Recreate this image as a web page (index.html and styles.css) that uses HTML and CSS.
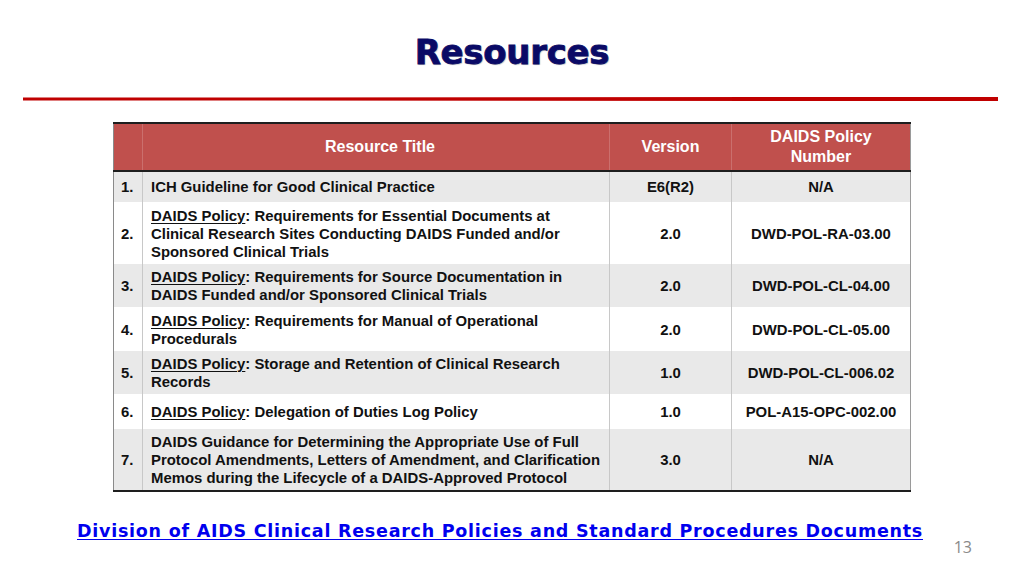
FILE: index.html
```html
<!DOCTYPE html>
<html>
<head>
<meta charset="utf-8">
<link rel="stylesheet" href="styles.css">
</head>
<body>
<div class="slide">
  <h1 class="title">Resources</h1>
  <div class="rule"></div>
  <table class="res">
    <thead>
      <tr>
        <th class="num"></th>
        <th class="ttl">Resource Title</th>
        <th class="ver">Version</th>
        <th class="pol">DAIDS Policy<br>Number</th>
      </tr>
    </thead>
    <tbody>
      <tr class="alt r1">
        <td class="num">1.</td>
        <td class="ttl">ICH Guideline for Good Clinical Practice</td>
        <td class="ver">E6(R2)</td>
        <td class="pol">N/A</td>
      </tr>
      <tr class="r2">
        <td class="num">2.</td>
        <td class="ttl"><u>DAIDS Policy</u>: Requirements for Essential Documents at<br>Clinical Research Sites Conducting DAIDS Funded and/or<br>Sponsored Clinical Trials</td>
        <td class="ver">2.0</td>
        <td class="pol">DWD-POL-RA-03.00</td>
      </tr>
      <tr class="alt">
        <td class="num">3.</td>
        <td class="ttl"><u>DAIDS Policy</u>: Requirements for Source Documentation in<br>DAIDS Funded and/or Sponsored Clinical Trials</td>
        <td class="ver">2.0</td>
        <td class="pol">DWD-POL-CL-04.00</td>
      </tr>
      <tr class="r4">
        <td class="num">4.</td>
        <td class="ttl"><u>DAIDS Policy</u>: Requirements for Manual of Operational<br>Procedurals</td>
        <td class="ver">2.0</td>
        <td class="pol">DWD-POL-CL-05.00</td>
      </tr>
      <tr class="alt">
        <td class="num">5.</td>
        <td class="ttl"><u>DAIDS Policy</u>: Storage and Retention of Clinical Research<br>Records</td>
        <td class="ver">1.0</td>
        <td class="pol">DWD-POL-CL-006.02</td>
      </tr>
      <tr class="r6">
        <td class="num">6.</td>
        <td class="ttl"><u>DAIDS Policy</u>: Delegation of Duties Log Policy</td>
        <td class="ver">1.0</td>
        <td class="pol">POL-A15-OPC-002.00</td>
      </tr>
      <tr class="alt last">
        <td class="num">7.</td>
        <td class="ttl">DAIDS Guidance for Determining the Appropriate Use of Full<br>Protocol Amendments, Letters of Amendment, and Clarification<br>Memos during the Lifecycle of a DAIDS-Approved Protocol</td>
        <td class="ver">3.0</td>
        <td class="pol">N/A</td>
      </tr>
    </tbody>
  </table>
  <div class="footer">
    <a class="link" href="#">Division of AIDS Clinical Research Policies and Standard Procedures Documents</a>
    <span class="pagenum">13</span>
  </div>
</div>
</body>
</html>
```

FILE: styles.css
```css
* { box-sizing: border-box; }
html, body { margin: 0; padding: 0; background: #fff; }
.slide {
  width: 1024px;
  height: 576px;
  display: flex;
  flex-direction: column;
  overflow: hidden;
  font-family: "Liberation Sans", Arial, sans-serif;
}
.slide > * { flex-shrink: 0; }
.title {
  margin: 0;
  padding-top: 30px;
  height: 96px;
  text-align: center;
  font-family: "DejaVu Sans", sans-serif;
  font-weight: 900;
  font-size: 34px;
  line-height: 44px;
  color: #0a0a66;
  -webkit-text-stroke: 0.8px #0a0a66;
  text-shadow: 1px 1px 1px rgba(0,0,0,0.25);
  letter-spacing: -0.3px;
}
.rule {
  margin: 1px 26px 0 23px;
  height: 4px;
  background: #c00000;
  clip-path: polygon(0 0.5px, 100% 0, 100% 100%, 0 3.5px);
}
.res {
  margin: 21px 0 0 113px;
  width: 797px;
  table-layout: fixed;
  border-collapse: collapse;
  font-size: 14.9px;
  font-weight: bold;
  line-height: 18px;
  color: #111;
  border-left: 1px solid #8a8a8a;
  border-right: 1px solid #9a9a9a;
}
.res th {
  background: #c0504d;
  color: #fff;
  font-size: 16px;
  line-height: 20px;
  height: 48px;
  padding: 3px 8px;
  border-top: 2px solid #1e1e1e;
  border-bottom: 2px solid #1e1e1e;
  border-left: 1px solid rgba(255,255,255,0.18);
}
.res th:first-child { border-left: 1px solid #8a8a8a; }
.res td {
  padding: 4px 8px 3px;
  border-left: 1px solid #c8c8c8;
  vertical-align: middle;
  background: #fff;
}
.res td:first-child { border-left: 1px solid #8a8a8a; }
.res tr.alt td { background: #e9e9e9; }
.res tr.r1 td { height: 31px; padding-top: 2px; padding-bottom: 2px; }
.res tr.r2 td { height: 62px; }
.res tr.r4 td { height: 44px; }
.res tr.r6 td { height: 35px; }
.res tr.last td { border-bottom: 2px solid #1e1e1e; height: 61px; }
.res .num { width: 29px; padding-left: 7px; padding-right: 0; text-align: left; }
.res .ttl { width: 467px; text-align: left; padding-left: 8px; padding-right: 0; white-space: nowrap; }
.res th.ttl { text-align: center; }
.res .ver { width: 122px; text-align: center; }
.res .pol { width: 179px; text-align: center; padding-left: 2px; padding-right: 2px; }
.res u { text-decoration-thickness: 1px; text-underline-offset: 2px; }
.footer {
  display: flex;
  align-items: flex-start;
  margin-top: 28px;
  padding-left: 77px;
}
.link {
  font-family: "DejaVu Sans", Verdana, sans-serif;
  font-weight: bold;
  font-size: 17.5px;
  line-height: 22px;
  color: #0000ee;
  text-decoration: underline;
  text-underline-offset: 2px;
  letter-spacing: 0.75px;
}
.pagenum {
  margin-left: auto;
  margin-right: 52px;
  margin-top: 16px;
  font-family: "Open Sans", "Liberation Sans", sans-serif;
  font-size: 16px;
  color: #8a8a8a;
}
```
